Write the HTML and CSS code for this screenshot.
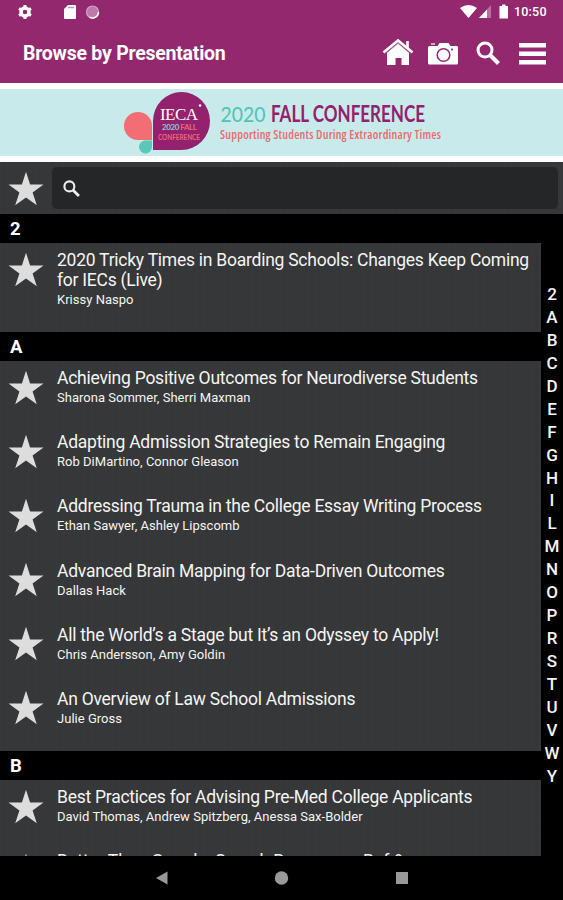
FILE: index.html
```
<!DOCTYPE html>
<html lang="en">
<head>
<meta charset="utf-8">
<title>Browse by Presentation</title>
<link rel="stylesheet" href="styles.css">
</head>
<body>
<svg class="defs" aria-hidden="true">
  <symbol id="star" viewBox="0 0 36 36"><path d="M18 .8l4.100 12.800 13.400 0-10.900 7.900 4.200 12.800L18 26.400 7.200 34.300l4.200-12.800L.5 13.600l13.400 0z" fill="#ddd"/></symbol>
  <symbol id="lens" viewBox="0 0 24 24"><circle cx="9" cy="9" r="7" fill="none" stroke="currentColor" stroke-width="3"/><path d="M14 14l8.500 8.500" stroke="currentColor" stroke-width="4"/></symbol>
</svg>
<div class="status">
  <svg class="status-left" viewBox="0 0 110 24">
    <circle cx="25" cy="12" r="4" fill="none" stroke="#fff" stroke-width="3.5"/>
    <path d="M25 5v3M25 16v3M19 8.500l2.500 1.500M28.500 14l2.500 1.500M19 15.500l2.500-1.500M28.500 10l2.500-1.500" stroke="#fff" stroke-width="3"/>
    <path d="M68 5h7q1 0 1 1v12q0 1-1 1H65q-1 0-1-1V9z" fill="#fff"/>
    <path d="M68 7.500h6" stroke="#b99caf" stroke-width="1.500"/>
    <circle cx="92.500" cy="12" r="6" fill="#bd79aa" stroke="#d3a2c6" stroke-width="1.200"/>
    <path d="M98.500 12a6 6 0 0 1-9 5.200" stroke="#fff" stroke-width="1.500" fill="none"/>
  </svg>
  <svg class="status-right" viewBox="0 0 54 24">
    <path d="M0 8q8.500-6 17 0L8.500 18z" fill="#fff"/>
    <path d="M31 5v13H19z" fill="#b76ea3"/><path d="M27 9.500V18h-8z" fill="#fff"/>
    <path d="M42 4.500h3.500V6H48v12.500h-8.500V6H42z" fill="#fff"/>
  </svg>
  <span class="clock">10:50</span>
</div>
<header class="bar">
  <h1>Browse by Presentation</h1>
  <nav class="tools">
    <svg class="home" viewBox="0 0 32 28"><path d="M5 14.500L16 5l11 9.500V27h-7.500v-7h-6v7H5z" fill="#fff"/><path d="M1.500 14.500L16 2.500l14.500 12" fill="none" stroke="#fff" stroke-width="2.600"/><path d="M4 15.300L16 5.300l12 10" fill="none" stroke="#a95a93" stroke-width=".8"/><path d="M25.500 3v7" stroke="#fff" stroke-width="2.600"/></svg>
    <svg class="camera" viewBox="0 0 30 24"><path d="M1.500 4H9.500l2-3h9l2 3H28.500q1.500 0 1.500 1.500V21q0 1.500-1.500 1.500h-27Q0 22.500 0 21V5.500Q0 4 1.500 4z" fill="#fff"/><path d="M3 2h4" stroke="#d7a2c8" stroke-width="2"/><circle cx="15.500" cy="13" r="6.300" fill="none" stroke="#93286f" stroke-width="1.500"/><circle cx="24" cy="7.500" r="1.100" fill="#93286f"/></svg>
    <svg class="find"><use href="#lens"/></svg>
    <svg class="menu" viewBox="0 0 27 22"><path d="M0 2.300h27M0 10.800h27M0 19.300h27" stroke="#fff" stroke-width="4.400"/></svg>
  </nav>
</header>
<div class="banner">
  <svg viewBox="0 0 563 67">
    <circle cx="138" cy="37" r="14" fill="#f26e74"/><path d="M138 37h14v14h-14z" fill="#f26e74"/>
    <circle cx="145.500" cy="58" r="6.500" fill="#59c8b6"/><path d="M145 51.500h7V58h-7z" fill="#59c8b6"/>
    <path d="M153 61V32a28.500 29 0 1 1 28.500 29z" fill="#93216d"/>
    <g>
      <text class="ieca" x="160" y="30.500" textLength="38">IECA</text>
      <circle cx="200" cy="16.500" r="1.300" fill="#fff"/>
      <text class="small" x="162" y="41" textLength="35" fill="#89c9d8">2020 <tspan fill="#ee6675">FALL</tspan></text>
      <text class="small" x="158" y="50.500" textLength="42" fill="#ee6675" lengthAdjust="spacingAndGlyphs">CONFERENCE</text>
    </g>
    <text class="year" x="220.500" y="33" textLength="45" lengthAdjust="spacingAndGlyphs">2020</text>
    <text class="event" x="271" y="33" textLength="154" lengthAdjust="spacingAndGlyphs">FALL CONFERENCE</text>
    <text class="tagline" x="220" y="50" textLength="221">Supporting Students During Extraordinary Times</text>
  </svg>
</div>
<div class="search">
  <svg class="star"><use href="#star"/></svg>
  <div class="field"><svg class="field-icon"><use href="#lens"/></svg></div>
</div>
<main class="content">
  <div class="list">
    <h2>2</h2>
    <section class="first">
      <article><svg class="star"><use href="#star"/></svg><div><h3>2020 Tricky Times in Boarding Schools: Changes Keep Coming<br>for IECs (Live)</h3><p>Krissy Naspo</p></div></article>
    </section>
    <h2>A</h2>
    <section class="group-a">
      <article><svg class="star"><use href="#star"/></svg><div><h3>Achieving Positive Outcomes for Neurodiverse Students</h3><p>Sharona Sommer, Sherri Maxman</p></div></article>
      <article><svg class="star"><use href="#star"/></svg><div><h3>Adapting Admission Strategies to Remain Engaging</h3><p>Rob DiMartino, Connor Gleason</p></div></article>
      <article><svg class="star"><use href="#star"/></svg><div><h3>Addressing Trauma in the College Essay Writing Process</h3><p>Ethan Sawyer, Ashley Lipscomb</p></div></article>
      <article><svg class="star"><use href="#star"/></svg><div><h3>Advanced Brain Mapping for Data-Driven Outcomes</h3><p>Dallas Hack</p></div></article>
      <article><svg class="star"><use href="#star"/></svg><div><h3>All the World’s a Stage but It’s an Odyssey to Apply!</h3><p>Chris Andersson, Amy Goldin</p></div></article>
      <article><svg class="star"><use href="#star"/></svg><div><h3>An Overview of Law School Admissions</h3><p>Julie Gross</p></div></article>
    </section>
    <h2>B</h2>
    <section class="last">
      <article><svg class="star"><use href="#star"/></svg><div><h3>Best Practices for Advising Pre-Med College Applicants</h3><p>David Thomas, Andrew Spitzberg, Anessa Sax-Bolder</p></div></article>
      <article class="partial"><svg class="star"><use href="#star"/></svg><div><h3>Better Than Google: Search Resources, Ref &amp;</h3></div></article>
    </section>
  </div>
  <aside class="index">
    <span>2</span><span>A</span><span>B</span><span>C</span><span>D</span><span>E</span><span>F</span><span>G</span><span>H</span><span>I</span><span>L</span><span>M</span><span>N</span><span>O</span><span>P</span><span>R</span><span>S</span><span>T</span><span>U</span><span>V</span><span>W</span><span>Y</span>
  </aside>
</main>
<footer class="system">
  <svg viewBox="0 0 563 44"><path d="M156 22l11.500-6.500v13z" fill="#999"/><circle cx="281.500" cy="22" r="6.700" fill="#999"/><path d="M396 16h12v12h-12z" fill="#999"/></svg>
</footer>
</body>
</html>
```

FILE: styles.css
```
* { box-sizing: border-box; margin: 0; padding: 0; }
body {
  width: 563px; height: 900px; overflow: hidden;
  display: flex; flex-direction: column;
  background: #000; color: #f4f4f4;
  font-family: Roboto, sans-serif;
}
svg { display: block; flex: none; }
.defs { width: 0; height: 0; position: absolute; }
.status { height: 24px; flex: none; display: flex; align-items: center; background: #93286f; color: #fff; }
.status-left { width: 110px; height: 24px; margin-right: 350px; }
.status-right { width: 54px; height: 24px; }
.clock { font-size: 12.500px; font-weight: 500; line-height: 24px; letter-spacing: .2px; }
.bar { height: 59px; flex: none; display: flex; justify-content: space-between; padding: 0 17px 0 23px; background: #93286f; color: #fff; }
h1 { font-size: 19.500px; line-height: 59px; font-weight: 700; letter-spacing: -.24px; white-space: nowrap; }
.tools { display: flex; align-items: center; color: #fff; }
.home { width: 32px; height: 28px; margin: -3px 14px 0 0; }
.camera { width: 30px; height: 24px; margin-right: 18px; }
.find { width: 24px; height: 24px; margin: -2px 19px 0 0; }
.menu { width: 27px; height: 22px; }
.banner { height: 79px; flex: none; padding: 6px 0; background: #fdfdfd; }
.banner svg { width: 563px; height: 67px; background: #c8eaea; }
.banner text { font-family: Lato, sans-serif; }
.banner .ieca { font: 17px "Liberation Serif", serif; fill: #fff; }
.banner .small { font-size: 8px; font-weight: 700; }
.banner .year { font-size: 22px; fill: #4fc4b2; }
.banner .event { font-size: 22px; font-weight: 700; fill: #93216d; }
.banner .tagline { font-family: "Open Sans", sans-serif; font-size: 12px; font-weight: 600; font-stretch: 75%; fill: #ea6a71; }
.search, section {
  background-color: #363738;
  background-image: repeating-linear-gradient(90deg, #ffffff03 0 1px, transparent 1px 7px), repeating-linear-gradient(0deg, #00000006 0 1px, transparent 1px 5px);
}
.search { height: 52px; flex: none; display: flex; padding: 5px 5px 5px 8px; }
.star { width: 36px; height: 36px; }
.search .star { margin: 4px 8px 0 0; }
article .star { margin-top: 1.500px; }
.field { flex: 1; height: 42px; border-radius: 5px; background: #252627; padding: 13px 0 0 11px; }
.field-icon { width: 17px; height: 17px; color: #eee; }
.content { height: 642px; flex: none; display: flex; overflow: hidden; }
.list { width: 541px; }
h2 { height: 29px; padding-left: 10px; font-size: 18.500px; line-height: 30px; font-weight: 700; color: #fff; }
section { overflow: hidden; }
.first { height: 89px; }
.group-a { height: 390px; }
.last { height: 76px; }
article { height: 64.200px; display: flex; padding: 7px 0 0 8px; }
article div { margin-left: 13px; }
h3 { font-size: 17.500px; line-height: 20px; font-weight: 400; letter-spacing: -.25px; white-space: nowrap; }
.partial h3 { letter-spacing: 0; }
p { font-size: 13px; line-height: 20px; letter-spacing: .02px; white-space: nowrap; }
.index { width: 22px; padding-top: 69px; display: flex; flex-direction: column; align-items: center; }
.index span { height: 22.950px; flex: none; font-size: 17px; font-weight: 500; line-height: 23px; }
.system { height: 44px; flex: none; }
.system svg { width: 563px; height: 44px; }
```
